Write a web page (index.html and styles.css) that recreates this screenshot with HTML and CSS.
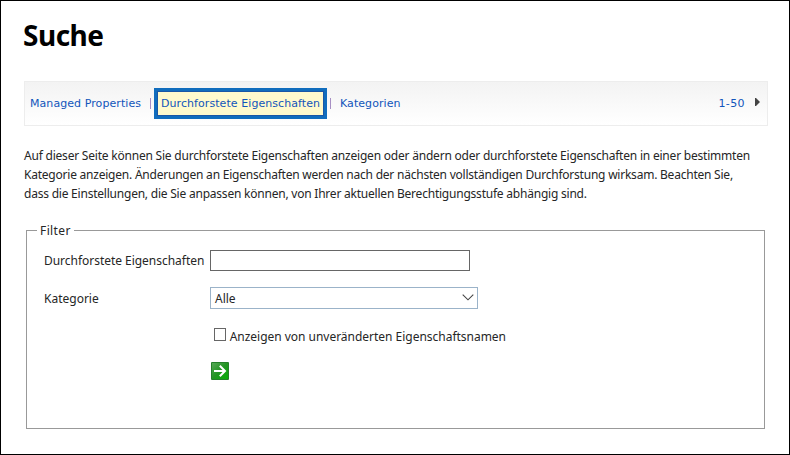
FILE: index.html
```html
<!DOCTYPE html>
<html lang="de">
<head>
<meta charset="utf-8">
<title>Suche</title>
<link rel="stylesheet" href="styles.css">
</head>
<body>
<main class="page">
  <h1 class="title">Suche</h1>
  <nav class="toolbar">
    <a class="link managed">Managed Properties</a>
    <span class="sep"></span>
    <a class="link current">Durchforstete Eigenschaften</a>
    <span class="sep"></span>
    <a class="link categories">Kategorien</a>
    <span class="range">1-50</span>
    <svg class="next" width="5" height="8" viewBox="0 0 5 8"><path d="M0 0h1l4 4-4 4H0z" fill="#444"/></svg>
  </nav>
  <p class="intro">
    <span class="line one">Auf dieser Seite können Sie durchforstete Eigenschaften anzeigen oder ändern oder durchforstete Eigenschaften in einer bestimmten</span>
    <span class="line two">Kategorie anzeigen. Änderungen an Eigenschaften werden nach der nächsten vollständigen Durchforstung wirksam. Beachten Sie,</span>
    <span class="line three">dass die Einstellungen, die Sie anpassen können, von Ihrer aktuellen Berechtigungsstufe abhängig sind.</span>
  </p>
  <fieldset class="filter">
    <legend class="legend"><span class="legend-text">Filter</span></legend>
    <div class="form">
      <label class="label"><span class="label-crawled">Durchforstete Eigenschaften</span></label>
      <div class="input"></div>
      <label class="label"><span class="label-category">Kategorie</span></label>
      <div class="select"><span>Alle</span>
        <svg class="chevron" width="12" height="7" viewBox="0 0 12 7"><path d="M.7.7 6 5.8 11.3.7" fill="none" stroke="#444" stroke-width="1.1"/></svg>
      </div>
      <div class="check"><span class="box"></span><span class="check-text">Anzeigen von unveränderten Eigenschaftsnamen</span></div>
      <svg class="go" width="18" height="18" viewBox="0 0 18 18">
        <defs><linearGradient id="g" x1="0" y1="0" x2="1" y2="1"><stop offset="0" stop-color="#57a957"/><stop offset=".5" stop-color="#239423"/><stop offset="1" stop-color="#06b006"/></linearGradient></defs>
        <rect width="18" height="18" rx="1" fill="#25802a"/>
        <rect x="1" y="1" width="16" height="16" fill="url(#g)"/>
        <path d="M3 9h11M8.800 3.800 14 9l-5.200 5.200" fill="none" stroke="#fff" stroke-width="2"/>
      </svg>
    </div>
  </fieldset>
</main>
</body>
</html>
```
FILE: styles.css
```css
* { box-sizing: border-box; }
body { margin: 0; background: #fff; }
.page {
  width: 790px;
  height: 455px;
  border: 1px solid #000;
  padding: 14px 21px 0 23px;
  overflow: hidden;
  color: #262626;
  font: 12px/19px "Noto Sans", "Open Sans", sans-serif;
  white-space: nowrap;
}
.title {
  margin: 0 0 0 -1px;
  height: 66px;
  font-size: 28px;
  line-height: 40px;
  letter-spacing: -0.5px;
  color: #000;
}
.toolbar {
  display: flex;
  align-items: center;
  height: 45px;
  padding: 1px 7px 0 5px;
  border: 1px solid #ededed;
  background: linear-gradient(#f3f3f3, #fff);
  font: 11px/14px "DejaVu Sans", sans-serif;
  letter-spacing: 0.07px;
  color: #1155bb;
}
.managed { width: 120px; }
.sep { width: 1px; height: 11px; margin-top: -2px; background: #a78fc4; }
.current {
  width: 173px;
  height: 31px;
  margin: -1px 3px 0 3px;
  padding: 5px 0 0 3px;
  border: 3px solid #116dbd;
  box-shadow: inset 0 0 0 1px #1a57a6;
  padding: 6px 0 0 4px;
  background: #fffacd;
}
.categories { margin-left: 9px; }
.range { margin-left: auto; margin-right: 10px; letter-spacing: 0.4px; }
.next { margin-top: -5px; }
.intro { margin: 20px 0 0; }
.line { display: block; width: max-content; }
.one { letter-spacing: -0.21px; }
.two { letter-spacing: -0.225px; }
.three { letter-spacing: -0.22px; }
.filter {
  width: 739px;
  height: 208px;
  margin: 18px 0 0 2px;
  padding: 0 0 0 17px;
  border: 1px solid #999;
  min-width: 0;
}
.legend { margin-left: -7px; padding: 0 3px; height: 19px; line-height: 19px; letter-spacing: 0.4px; }
.form {
  display: grid;
  grid-template-columns: 166px 296px;
  grid-template-rows: 21px 21px 20px 18px;
  row-gap: 17px;
  padding-top: 10px;
  align-items: center;
}
.label-crawled { letter-spacing: -0.03px; }
.input { width: 260px; height: 21px; border: 1px solid #666; }
.select {
  display: flex;
  align-items: center;
  justify-content: space-between;
  align-self: start;
  width: 268px;
  height: 22px;
  margin-top: -1px;
  padding: 0 3px 0 4px;
  border: 1px solid #9bb3c9;
}
.chevron { margin-top: -1px; }
.check { grid-column: 2; display: flex; align-items: center; padding: 1px 0 0 4px; }
.box { width: 13px; height: 13px; margin: -4px 4px 0 0; border: 1px solid #666; }
.check-text { letter-spacing: -0.02px; }
.go { grid-column: 2; margin: -2px 0 0 1px; }
```
